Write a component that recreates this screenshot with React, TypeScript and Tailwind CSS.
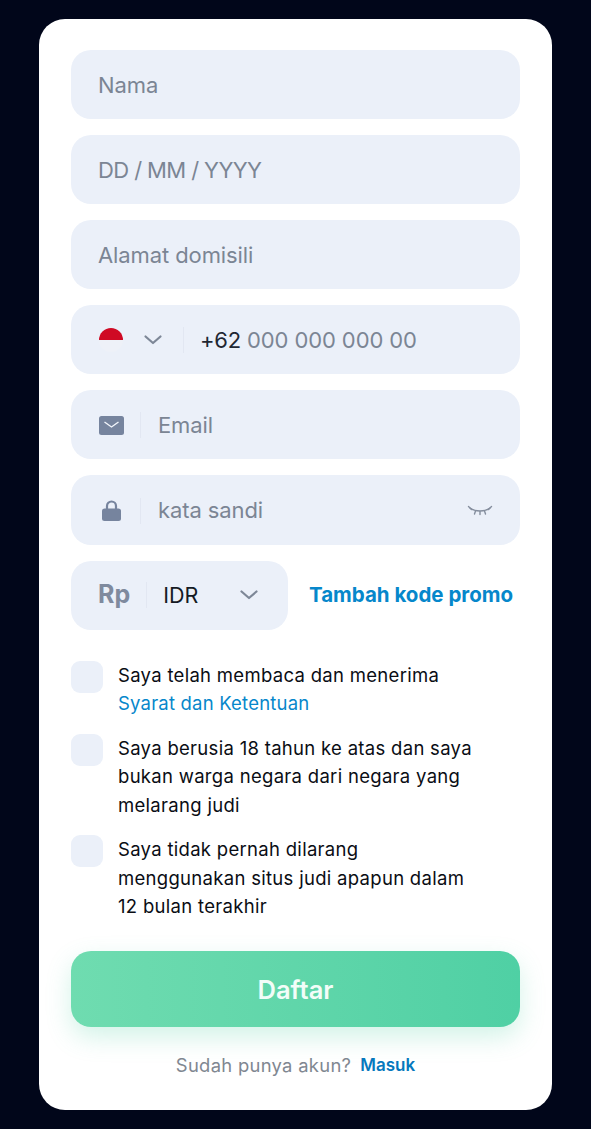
import React from "react";

const Divider = () => <div className="w-px h-[26px] bg-[#e2e7f2]" />;

const Chevron = () => (
  <svg width="20" height="12" viewBox="0 0 20 12" fill="none">
    <path d="M2.5 2.5 L10 9 L17.5 2.5" stroke="#7d8797" strokeWidth="2.2" strokeLinecap="round" strokeLinejoin="round" />
  </svg>
);

const Field = ({ children }: { children: React.ReactNode }) => (
  <div className="h-[69.1px] rounded-[20px] bg-[#ebf0f9] flex items-center shrink-0 pt-[1px]">{children}</div>
);

const Placeholder = ({ children, tight }: { children: React.ReactNode; tight?: boolean }) => (
  <span className={tight ? "text-[22px] text-[#7b8594] tracking-[-0.6px]" : "text-[22px] text-[#7b8594] tracking-[-0.1px]"}>{children}</span>
);

const Check = ({ lines }: { lines: React.ReactNode }) => (
  <div className="flex gap-[15px]">
    <div className="w-[32px] h-[32px] rounded-[9px] bg-[#ebf0f9] shrink-0" />
    <div className="text-[18.5px] leading-[28.4px] text-[#0a0d14] tracking-[0.3px]">{lines}</div>
  </div>
);

export default function App() {
  return (
    <div className="w-[591px] h-[1129px] bg-[#01061a] pt-[19px] pl-[39px] font-['Inter',sans-serif]">
      <div className="w-[513px] h-[1091px] bg-white rounded-[26px] pt-[31px] px-[32px] flex flex-col">
        <div className="flex flex-col gap-[16px]">
          <Field><div className="pl-[27px]"><Placeholder>Nama</Placeholder></div></Field>
          <Field><div className="pl-[27px]"><Placeholder tight>DD / MM / YYYY</Placeholder></div></Field>
          <Field><div className="pl-[27px]"><Placeholder>Alamat domisili</Placeholder></div></Field>
          <Field>
            <div className="pl-[28px] flex items-center">
              <div className="w-[24px] h-[24px] rounded-full overflow-hidden flex flex-col mb-[1px]">
                <div className="h-[12px] bg-[#cf0a24]" />
                <div className="h-[12px] bg-[#eef1f8]" />
              </div>
              <div className="ml-[20px]"><Chevron /></div>
              <div className="ml-[20px]"><Divider /></div>
              <span className="ml-[16px] text-[22px] text-[#1f2733] tracking-[-0.2px]">+62</span>
              <span className="ml-[6px] text-[22px] text-[#7b8594] tracking-[-0.1px]">000 000 000 00</span>
            </div>
          </Field>
          <Field>
            <div className="pl-[28px] flex items-center">
              <svg width="25" height="19" viewBox="0 0 25 19" fill="none">
                <rect width="25" height="19" rx="2.5" fill="#76849e" />
                <path d="M5.5 6 L12.5 11 L19.5 6" stroke="#f2f5fb" strokeWidth="1.4" fill="none" />
              </svg>
              <div className="ml-[16px]"><Divider /></div>
              <div className="ml-[17px]"><Placeholder>Email</Placeholder></div>
            </div>
          </Field>
          <Field>
            <div className="pl-[31px] pr-[27px] flex items-center w-full">
              <svg width="19" height="21" viewBox="0 0 19 21" fill="none">
                <path d="M5 9 V6 a4.5 4.5 0 0 1 9 0 V9" stroke="#76849e" strokeWidth="2.2" fill="none" />
                <rect y="8.5" width="19" height="12.5" rx="2.5" fill="#76849e" />
              </svg>
              <div className="ml-[19px]"><Divider /></div>
              <div className="ml-[17px]"><Placeholder>kata sandi</Placeholder></div>
              <svg className="ml-auto" width="26" height="12" viewBox="0 0 26 12" fill="none" stroke="#858e9e" strokeWidth="1.4" strokeLinecap="round">
                <path d="M3 3 C8 7 18 7 23 3" />
                <path d="M1.5 1.5 L4.5 4.5 M8.5 6 L7.5 9 M13 6.5 V9.5 M17.5 6 L18.5 9 M24.5 1.5 L21.5 4.5" />
              </svg>
            </div>
          </Field>
          <div className="flex items-center">
            <div className="w-[217px] h-[69px] shrink-0 rounded-[20px] bg-[#ebf0f9] flex items-center pl-[27px]">
              <span className="text-[25px] font-bold text-[#7f8a9e]">Rp</span>
              <div className="ml-[16px]"><Divider /></div>
              <span className="ml-[16px] text-[21.5px] text-[#141a24]">IDR</span>
              <div className="ml-[41px]"><Chevron /></div>
            </div>
            <span className="ml-[21px] text-[20.5px] font-bold text-[#0687cb] whitespace-nowrap">Tambah kode promo</span>
          </div>
        </div>
        <div className="mt-[31px] flex flex-col gap-[16.4px]">
          <Check lines={<>Saya telah membaca dan menerima<br /><span className="text-[#0687cb] tracking-[0.2px]">Syarat dan Ketentuan</span></>} />
          <Check lines={<>Saya berusia 18 tahun ke atas dan saya<br />bukan warga negara dari negara yang<br />melarang judi</>} />
          <Check lines={<>Saya tidak pernah dilarang<br />menggunakan situs judi apapun dalam<br />12 bulan terakhir</>} />
        </div>
        <div className="mt-[30.4px] h-[76px] shrink-0 rounded-[20px] bg-gradient-to-r from-[#6fdcb0] to-[#4fd0a4] shadow-[0_10px_24px_rgba(80,208,164,0.25)] flex items-center justify-center pt-[2px]">
          <span className="text-[25.5px] font-semibold text-[#f2fdf8]">Daftar</span>
        </div>
        <div className="mt-[25px] flex justify-center items-center gap-[9px]">
          <span className="text-[18.4px] text-[#808791] tracking-[0.3px]">Sudah punya akun?</span>
          <span className="text-[17px] font-semibold text-[#0678bd]">Masuk</span>
        </div>
      </div>
    </div>
  );
}
